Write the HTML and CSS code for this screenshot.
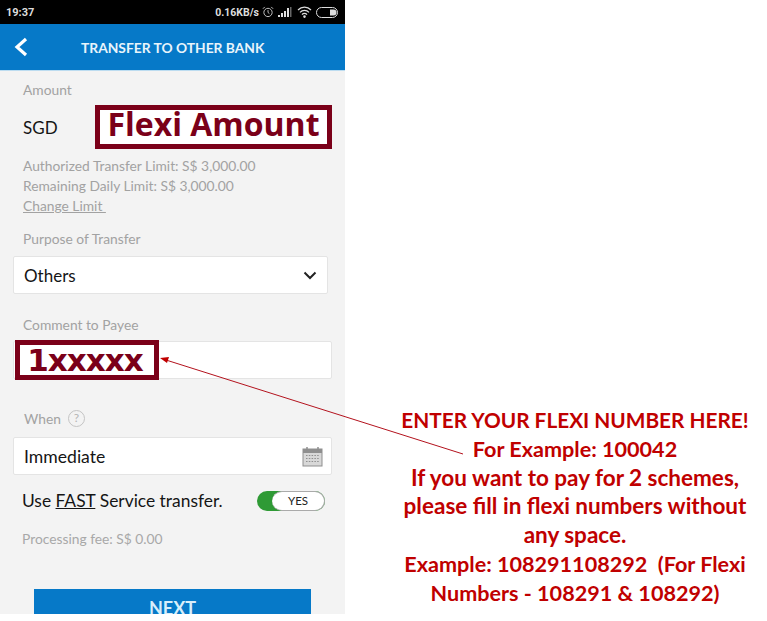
FILE: index.html
```html
<!DOCTYPE html>
<html lang="en">
<head>
  <meta charset="UTF-8" />
  <title>Transfer to other bank</title>
  <meta name="viewport" content="width=device-width, initial-scale=1.0" />
  <link rel="stylesheet" href="styles.css">
</head>
<body>

<div class="page">
  <div class="phone">
    <div class="status-bar">
      <span>19:37</span>
      <div class="status-icons">
        <span class="speed">0.16KB/s</span>
        <svg width="12" height="12" viewBox="0 0 13 13" fill="none" stroke="#ccc" stroke-width="1">
          <circle cx="6.5" cy="7" r="4.5"/>
          <path d="M6.5 4.5V7L8 8.2M1 3l2-2M12 3l-2-2"/>
        </svg>
        <svg width="15" height="10" viewBox="0 0 15 10" fill="#ddd">
          <rect x="0" y="8" width="2" height="2"/>
          <rect x="3" y="6" width="2" height="4"/>
          <rect x="6" y="4" width="2" height="6"/>
          <rect x="9" y="1" width="2" height="9"/>
          <rect x="12" y="0" width="1.5" height="10" fill="#666"/>
        </svg>
        <svg width="15" height="12" viewBox="0 0 15 12" fill="none" stroke="#ddd" stroke-width="1.2">
          <path d="M1 4a9 9 0 0 1 13 0M3 6.4a6 6 0 0 1 9 0M5 8.6a3.2 3.2 0 0 1 5 0"/>
          <circle cx="7.5" cy="10.6" r=".7" fill="#ddd"/>
        </svg>
        <svg width="23" height="11" viewBox="0 0 23 11" fill="none">
          <rect x=".5" y=".5" width="21" height="10" rx="5" stroke="#ddd"/>
          <path d="M14 2.5h3.5a3 3 0 0 1 0 6H14z" fill="#ddd"/>
        </svg>
      </div>
    </div>

    <header class="app-header">
      <svg class="back" width="14" height="20" viewBox="0 0 14 20" fill="none" stroke="#fff" stroke-width="3.2">
        <path d="M12 2 3 10l9 8"/>
      </svg>
      <span class="app-title">TRANSFER TO OTHER BANK</span>
    </header>

    <main class="form">
      <p class="label label-amount">Amount</p>
      <div class="amount-row">
        <span class="currency">SGD</span>
        <div class="flexi-box">Flexi Amount</div>
      </div>
      <div class="limits">
        <p>Authorized Transfer Limit: S$ 3,000.00</p>
        <p>Remaining Daily Limit: S$ 3,000.00</p>
        <p class="change-limit">Change Limit&nbsp;</p>
      </div>

      <p class="label label-purpose">Purpose of Transfer</p>
      <div class="field field-select">
        <span>Others</span>
        <svg width="14" height="9" viewBox="0 0 14 9" fill="none" stroke="#222" stroke-width="2">
          <path d="M1.5 1.5 7 7l5.500-5.500"/>
        </svg>
      </div>

      <p class="label label-comment">Comment to Payee</p>
      <div class="field field-comment">
        <div class="number-box">1xxxxx</div>
      </div>

      <div class="label label-when">
        <span>When</span>
        <span class="help">?</span>
      </div>
      <div class="field field-when">
        <span>Immediate</span>
        <svg width="21" height="21" viewBox="0 0 21 21">
          <rect x="1" y="3" width="19" height="17" fill="#d8d8d8" stroke="#8f8f8f"/>
          <rect x="1" y="3" width="19" height="4" fill="#8f8f8f"/>
          <path d="M5 1v4M16 1v4" stroke="#8f8f8f" stroke-width="1.500"/>
          <path d="M4 9.500h13M4 12.500h13M4 15.500h13" stroke="#8f8f8f" stroke-dasharray="1.500 1.300"/>
        </svg>
      </div>

      <div class="fast-row">
        <span>Use <u>FAST</u> Service transfer.</span>
        <div class="toggle"><span class="toggle-label">YES</span></div>
      </div>

      <p class="fee">Processing fee: S$ 0.00</p>

      <div class="next-btn">NEXT</div>
    </main>
  </div>

  <aside class="callout">
    <p class="callout-head">ENTER YOUR FLEXI NUMBER HERE!</p>
    <p class="callout-digits">For Example: 100042</p>
    <p>If you want to pay for 2 schemes,</p>
    <p>please fill in flexi numbers without</p>
    <p>any space.</p>
    <p class="callout-digits">Example: 108291108292 &nbsp;(For Flexi</p>
    <p class="callout-digits">Numbers - 108291 &amp; 108292)</p>
  </aside>
</div>

<!-- Стрелка -->
<svg class="arrow" width="767" height="621" viewBox="0 0 767 621" fill="none">
  <path d="M166 360 463 454" stroke="#b3121d" stroke-width="1"/>
  <path d="M160 358l9-1-2 6z" fill="#c00000"/>
</svg>

</body>
</html>
```

FILE: styles.css
```css
body {
  font-family: Lato, "Open Sans", sans-serif;
  background: white;
  margin: 0;
  padding: 0;
}

p {
  margin: 0;
}

.page {
  display: flex;
  align-items: flex-start;
}

/* Телефон */
.phone {
  width: 345px;
  height: 614px;
  flex-shrink: 0;
  overflow: hidden;
  background: #f3f3f3;
}

.status-bar {
  height: 24px;
  background: black;
  color: #ddd;
  font-size: 11px;
  font-weight: bold;
  font-family: Roboto, sans-serif;
  padding: 0 6px;
  display: flex;
  align-items: center;
  justify-content: space-between;
}

.status-icons {
  display: flex;
  align-items: center;
  gap: 4px;
}

.speed {
  font-size: 10.5px;
  margin-right: -1px;
}

.app-header {
  height: 46px;
  background: #0679c8;
  border-bottom: 1px solid #bcdcf0;
  color: #e8f4fb;
  display: flex;
  align-items: center;
  padding-left: 14px;
}

.back {
  flex-shrink: 0;
}

.app-title {
  margin-left: 53px;
  font-size: 13.8px;
  font-weight: bold;
}

/* Форма */
.form {
  padding: 0 13px;
}

.label {
  color: #a2a2a2;
  font-size: 13.8px;
  line-height: 16px;
  padding-left: 10px;
}

.label-amount {
  padding-top: 11px;
}

.amount-row {
  display: flex;
  align-items: center;
  margin-top: 7px;
  padding-left: 10px;
}

.currency {
  color: #151515;
  font-size: 17px;
  width: 72px;
}

.flexi-box {
  width: 237px;
  height: 44px;
  box-sizing: border-box;
  border: 5px solid #7b0019;
  background: white;
  color: #7b0019;
  font-family: "Open Sans", sans-serif;
  font-size: 32px;
  font-weight: bold;
  line-height: 28px;
  white-space: nowrap;
  text-align: center;
}

.limits {
  margin-top: 7px;
  padding-left: 10px;
  color: #a2a2a2;
  font-size: 13.8px;
  line-height: 20px;
}

.change-limit {
  text-decoration: underline;
}

.label-purpose {
  margin-top: 15px;
}

.field {
  height: 38px;
  box-sizing: border-box;
  background: white;
  border: 1px solid #e4e4e4;
  border-radius: 2px;
  color: #151515;
  font-size: 17px;
  display: flex;
  align-items: center;
  justify-content: space-between;
  padding: 0 10px;
}

.field-select {
  margin-top: 9px;
  width: 315px;
}

.label-comment {
  margin-top: 23px;
}

.field-comment {
  margin-top: 8px;
  width: 319px;
  padding: 0;
  overflow: visible;
}

.number-box {
  width: 144px;
  height: 40px;
  margin-left: 1px;
  padding-right: 4px;
  box-sizing: border-box;
  border: 5px solid #7b0019;
  background: white;
  color: #7b0019;
  font-family: "DejaVu Sans", sans-serif;
  font-size: 31px;
  font-weight: bold;
  letter-spacing: -1px;
  line-height: 30px;
  text-align: center;
}

.label-when {
  margin-top: 31px;
  padding-left: 11px;
  display: flex;
  align-items: center;
  gap: 7px;
}

.help {
  width: 17px;
  height: 17px;
  box-sizing: border-box;
  border: 1.500px solid #c4c4c4;
  border-radius: 50%;
  color: #b5b5b5;
  font-size: 12px;
  line-height: 14px;
  text-align: center;
}

.field-when {
  margin-top: 10px;
  width: 319px;
  padding-right: 8px;
  font-size: 17.6px;
}

.fast-row {
  margin-top: 15px;
  padding: 0 7px 0 9px;
  display: flex;
  align-items: center;
  justify-content: space-between;
  color: #151515;
  font-size: 17.4px;
}

.toggle {
  width: 68px;
  height: 20px;
  box-sizing: border-box;
  border-radius: 10px;
  background: #2f9a35;
}

.toggle-label {
  display: block;
  height: 20px;
  margin-left: 15px;
  box-sizing: border-box;
  border: 1px solid #aaa;
  border-left: none;
  border-radius: 10px;
  background: white;
  font-size: 11.5px;
  line-height: 17px;
  text-align: center;
  color: #222;
}

.fee {
  margin-top: 20px;
  padding-left: 9px;
  color: #a8a8a8;
  font-size: 13.8px;
  line-height: 16px;
}

.next-btn {
  margin: 42px 21px 0 21px;
  height: 44px;
  background: #0679c8;
  color: #d8eefa;
  font-size: 18px;
  font-weight: bold;
  line-height: 38px;
  text-align: center;
}

/* Подпись справа */
.callout {
  flex-grow: 1;
  padding: 406px 0 0 38px;
  color: #c00000;
  font-family: Lato, sans-serif;
  font-size: 22.5px;
  font-weight: bold;
  line-height: 28.8px;
  text-align: center;
  white-space: nowrap;
}

.callout-head {
  font-size: 20.8px;
}

.callout-digits {
  font-size: 21.6px;
}

.arrow {
  position: absolute;
  left: 0;
  top: 0;
  pointer-events: none;
}
```
